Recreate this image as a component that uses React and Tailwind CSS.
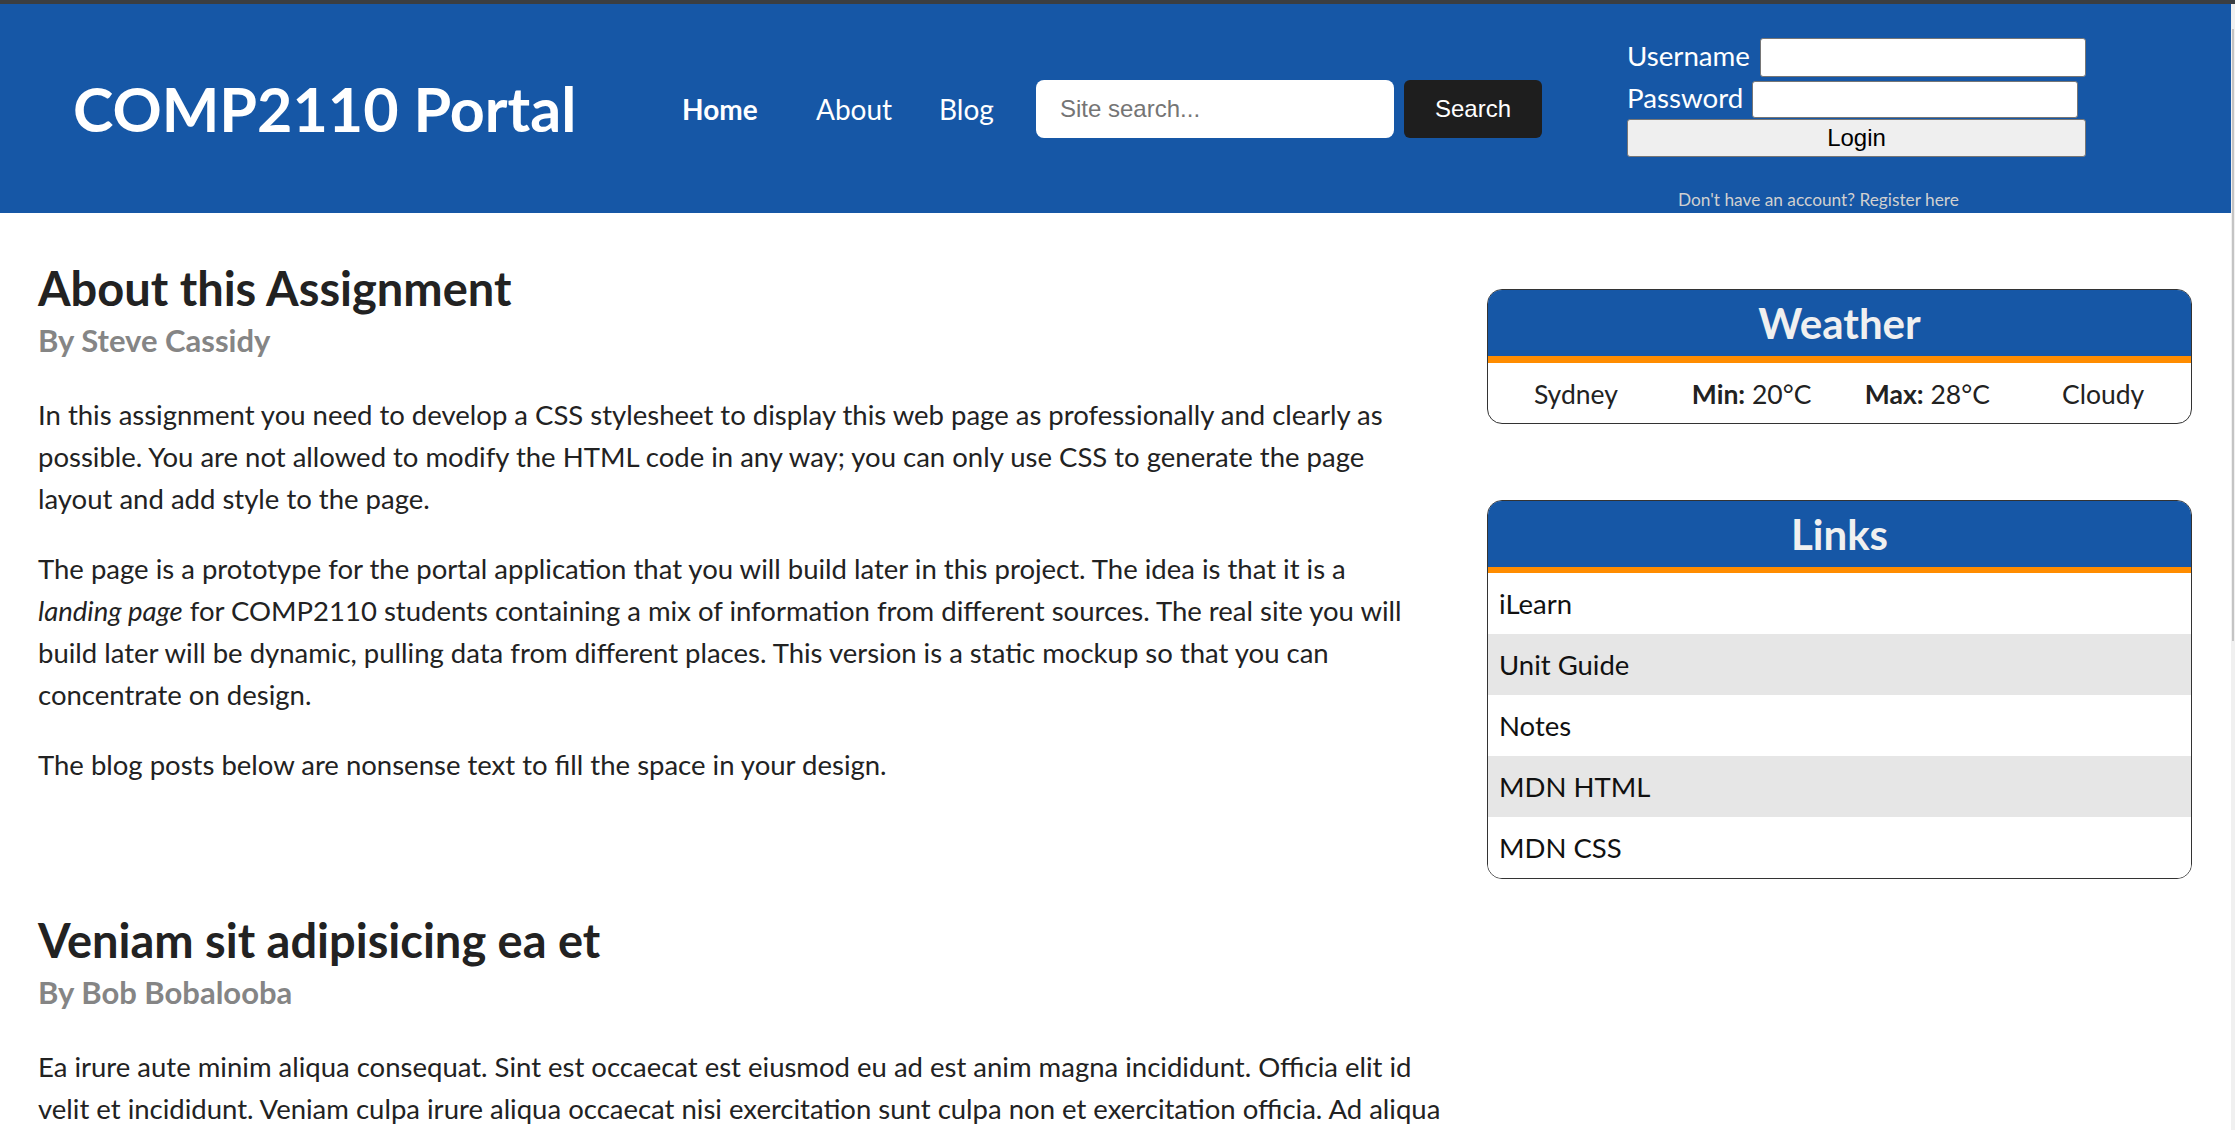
import React from 'react'

const links = ['iLearn', 'Unit Guide', 'Notes', 'MDN HTML', 'MDN CSS']

const App = () => {
  return (
    <div className="h-[1130px] overflow-hidden bg-white font-['Lato',sans-serif] text-[#222]">
      <div className="h-[4px] bg-[#3b3e41]" />
      <div className="flex">
        <div className="w-[2231px]">
          <header className="h-[209px] bg-[#1657a6] flex items-center">
            <h1 className="ml-[73px] w-[509px] whitespace-nowrap text-white font-bold text-[61px] leading-none">COMP2110 Portal</h1>
            <nav className="ml-[100px] flex text-white text-[28px]">
              <a className="w-[134px] font-bold">Home</a>
              <a className="w-[123px]">About</a>
              <a className="w-[52px]">Blog</a>
            </nav>
            <div className="ml-[45px] flex gap-[10px]">
              <input
                placeholder="Site search..."
                className="w-[358px] h-[58px] rounded-[8px] bg-white px-[24px] text-[24px] text-black placeholder:text-[#757575] font-['Liberation_Sans',Arial,sans-serif] outline-none"
              />
              <button className="w-[138px] h-[58px] rounded-[6px] bg-[#1e1e1e] text-white text-[24px] font-['Liberation_Sans',Arial,sans-serif]">
                Search
              </button>
            </div>
            <div className="ml-[85px] self-start mt-[34px] w-[459px] text-white">
              <div className="flex items-center h-[39px]">
                <label className="text-[27.7px] mr-[10px] mb-[3px]">Username</label>
                <input className="w-[326px] h-[39px] bg-white border border-[#767676] rounded-[3px]" />
              </div>
              <div className="flex items-center h-[37px] mt-[4px]">
                <label className="text-[27.7px] mr-[9px] mb-[3px]">Password</label>
                <input className="w-[326px] h-[37px] bg-white border border-[#767676] rounded-[3px]" />
              </div>
              <button className="w-full h-[38px] mt-[1px] bg-[#efefef] border border-[#767676] rounded-[3px] text-black text-[24px] font-['Liberation_Sans',Arial,sans-serif]">
                Login
              </button>
              <p className="ml-[51px] mt-[32px] text-[17.3px] leading-[22px] whitespace-nowrap text-[#d0d0d0]">Don't have an account? Register here</p>
            </div>
          </header>

          <div className="flex px-[38px] pt-[50px]">
            <main className="w-[1410px]">
              <article>
                <h2 className="text-[47px] leading-[50px] font-bold text-[#222]">About this Assignment</h2>
                <p className="mt-[10px] text-[31px] leading-[34px] font-bold text-[#858585]">By Steve Cassidy</p>
                <div className="mt-[37px] max-w-[1390px] text-[27.5px] leading-[42px] flex flex-col gap-[28px]">
                  <p>
                    In this assignment you need to develop a CSS stylesheet to display this web page as professionally and clearly as possible. You are not allowed to modify the HTML code in any way; you can only use CSS to generate the page layout and add style to the page.
                  </p>
                  <p>
                    The page is a prototype for the portal application that you will build later in this project. The idea is that it is a <em>landing page</em> for COMP2110 students containing a mix of information from different sources. The real site you will build later will be dynamic, pulling data from different places. This version is a static mockup so that you can concentrate on design.
                  </p>
                  <p>The blog posts below are nonsense text to fill the space in your design.</p>
                </div>
              </article>
              <article className="mt-[129px]">
                <h2 className="text-[47px] leading-[50px] font-bold text-[#222]">Veniam sit adipisicing ea et</h2>
                <p className="mt-[10px] text-[31px] leading-[34px] font-bold text-[#858585]">By Bob Bobalooba</p>
                <div className="mt-[37px] text-[27.5px] leading-[42px]">
                  <p>
                    Ea irure aute minim aliqua consequat. Sint est occaecat est eiusmod eu ad est anim magna incididunt. Officia elit id velit et incididunt. Veniam culpa irure aliqua occaecat nisi exercitation sunt culpa non et exercitation officia. Ad aliqua nulla laborum ea excepteur et. Ipsum do id laboris elit voluptate magna sunt.
                  </p>
                </div>
              </article>
            </main>

            <aside className="ml-[39px] w-[705px] pt-[26px]">
              <section className="border border-[#333] rounded-[15px] overflow-hidden">
                <h3 className="h-[66px] bg-[#1657a6] text-[#f0f0f0] text-center font-bold text-[42px] leading-[66px]">Weather</h3>
                <div className="h-[7px] bg-[#ff8c00]" />
                <div className="grid grid-cols-4 h-[60px] pt-[4px] items-center text-center text-[26.5px] text-[#222]">
                  <span>Sydney</span>
                  <span><b>Min:</b> 20°C</span>
                  <span><b>Max:</b> 28°C</span>
                  <span>Cloudy</span>
                </div>
              </section>

              <section className="mt-[76px] border border-[#333] rounded-[15px] overflow-hidden">
                <h3 className="h-[66px] bg-[#1657a6] text-[#f0f0f0] text-center font-bold text-[42px] leading-[66px]">Links</h3>
                <div className="h-[6px] bg-[#ff8c00]" />
                <ul>
                  {links.map((l, i) => (
                    <li
                      key={l}
                      className={i % 2 === 1 ? 'h-[61px] leading-[61px] pl-[11px] text-[27.5px] text-[#111] bg-[#e6e6e6]' : 'h-[61px] leading-[61px] pl-[11px] text-[27.5px] text-[#111] bg-white'}
                    >
                      {l}
                    </li>
                  ))}
                </ul>
              </section>
            </aside>
          </div>
        </div>
        <div className="w-[4px] h-[1126px] bg-[#f0f0f0] flex justify-center">
          <div className="w-[2px] h-[612px] mt-[25px] bg-[#c4c4c4]" />
        </div>
      </div>
    </div>
  )
}

export default App
